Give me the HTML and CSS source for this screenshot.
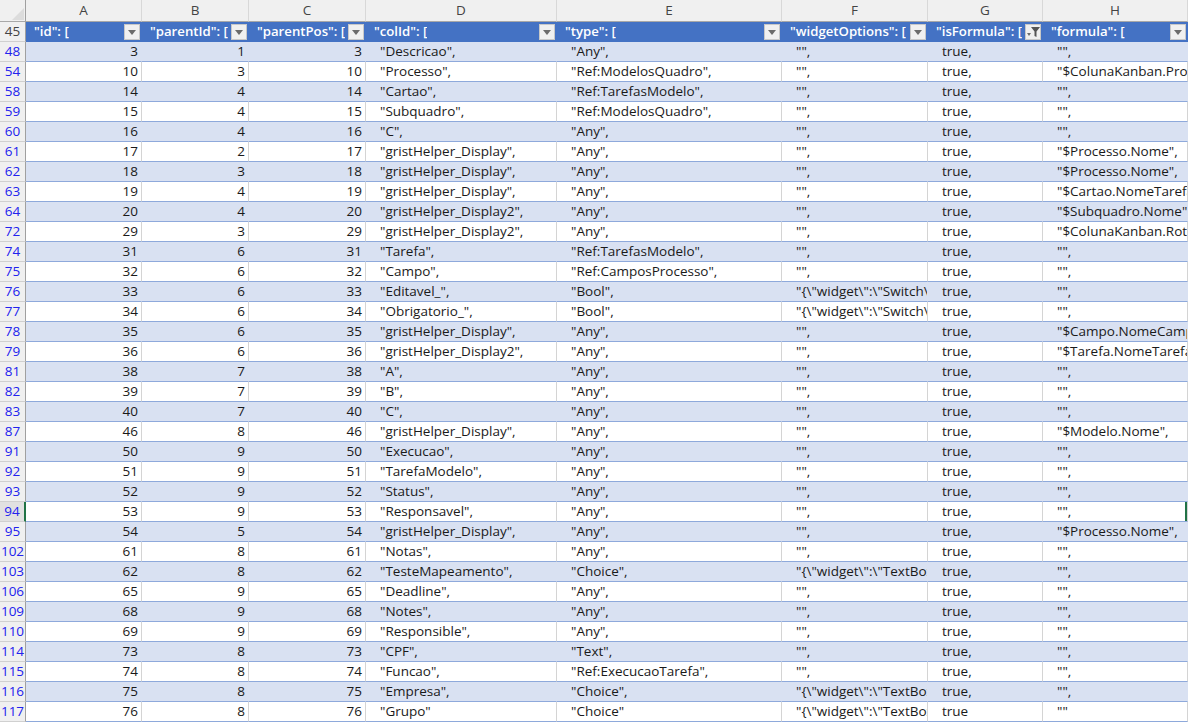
FILE: index.html
```html
<!DOCTYPE html>
<html lang="pt">
<head>
<meta charset="utf-8">
<title>Planilha</title>
<link rel="stylesheet" href="styles.css">
</head>
<body>
<svg class="defs" width="0" height="0" aria-hidden="true">
  <symbol id="dd" viewBox="0 0 14 14"><path d="M3 5h8L7 10z" fill="#6b6b6b"/></symbol>
  <symbol id="ff" viewBox="0 0 14 14"><path d="M5 2h9L10.5 6.5V12L8.5 11V6.5z" fill="#555"/><path d="M1 8h4L3 11z" fill="#6b6b6b"/></symbol>
</svg>
<table class="sheet">
<colgroup><col class="c-rn"><col class="c-a"><col class="c-b"><col class="c-c"><col class="c-d"><col class="c-e"><col class="c-f"><col class="c-g"><col class="c-h"></colgroup>
<thead>
<tr class="letters"><th class="corner"><svg width="14" height="14" viewBox="0 0 14 14"><path d="M13 1v12H1z" fill="#dcdcdc"/></svg></th><th>A</th><th>B</th><th>C</th><th>D</th><th>E</th><th>F</th><th>G</th><th>H</th></tr>
<tr class="filters"><th class="rn">45</th>
<th><div class="fh"><span>"id": [</span><button class="fb"><svg><use href="#dd"/></svg></button></div></th>
<th><div class="fh"><span>"parentId": [</span><button class="fb"><svg><use href="#dd"/></svg></button></div></th>
<th><div class="fh"><span>"parentPos": [</span><button class="fb"><svg><use href="#dd"/></svg></button></div></th>
<th><div class="fh"><span>"colId": [</span><button class="fb"><svg><use href="#dd"/></svg></button></div></th>
<th><div class="fh"><span>"type": [</span><button class="fb"><svg><use href="#dd"/></svg></button></div></th>
<th><div class="fh"><span>"widgetOptions": [</span><button class="fb"><svg><use href="#dd"/></svg></button></div></th>
<th><div class="fh"><span>"isFormula": [</span><button class="fb"><svg><use href="#ff"/></svg></button></div></th>
<th><div class="fh"><span>"formula": [</span><button class="fb"><svg><use href="#dd"/></svg></button></div></th></tr>
</thead>
<tbody id="rows">
<tr><th class="rn">48</th><td class="n">3</td><td class="n">1</td><td class="n">3</td><td><div>"Descricao",</div></td><td><div>"Any",</div></td><td><div>"",</div></td><td><div>true,</div></td><td><div>"",</div></td></tr>
<tr><th class="rn">54</th><td class="n">10</td><td class="n">3</td><td class="n">10</td><td><div>"Processo",</div></td><td><div>"Ref:ModelosQuadro",</div></td><td><div>"",</div></td><td><div>true,</div></td><td><div>"$ColunaKanban.Processo",</div></td></tr>
<tr><th class="rn">58</th><td class="n">14</td><td class="n">4</td><td class="n">14</td><td><div>"Cartao",</div></td><td><div>"Ref:TarefasModelo",</div></td><td><div>"",</div></td><td><div>true,</div></td><td><div>"",</div></td></tr>
<tr><th class="rn">59</th><td class="n">15</td><td class="n">4</td><td class="n">15</td><td><div>"Subquadro",</div></td><td><div>"Ref:ModelosQuadro",</div></td><td><div>"",</div></td><td><div>true,</div></td><td><div>"",</div></td></tr>
<tr><th class="rn">60</th><td class="n">16</td><td class="n">4</td><td class="n">16</td><td><div>"C",</div></td><td><div>"Any",</div></td><td><div>"",</div></td><td><div>true,</div></td><td><div>"",</div></td></tr>
<tr><th class="rn">61</th><td class="n">17</td><td class="n">2</td><td class="n">17</td><td><div>"gristHelper_Display",</div></td><td><div>"Any",</div></td><td><div>"",</div></td><td><div>true,</div></td><td><div>"$Processo.Nome",</div></td></tr>
<tr><th class="rn">62</th><td class="n">18</td><td class="n">3</td><td class="n">18</td><td><div>"gristHelper_Display",</div></td><td><div>"Any",</div></td><td><div>"",</div></td><td><div>true,</div></td><td><div>"$Processo.Nome",</div></td></tr>
<tr><th class="rn">63</th><td class="n">19</td><td class="n">4</td><td class="n">19</td><td><div>"gristHelper_Display",</div></td><td><div>"Any",</div></td><td><div>"",</div></td><td><div>true,</div></td><td><div>"$Cartao.NomeTarefa",</div></td></tr>
<tr><th class="rn">64</th><td class="n">20</td><td class="n">4</td><td class="n">20</td><td><div>"gristHelper_Display2",</div></td><td><div>"Any",</div></td><td><div>"",</div></td><td><div>true,</div></td><td><div>"$Subquadro.Nome",</div></td></tr>
<tr><th class="rn">72</th><td class="n">29</td><td class="n">3</td><td class="n">29</td><td><div>"gristHelper_Display2",</div></td><td><div>"Any",</div></td><td><div>"",</div></td><td><div>true,</div></td><td><div>"$ColunaKanban.Rotulo",</div></td></tr>
<tr><th class="rn">74</th><td class="n">31</td><td class="n">6</td><td class="n">31</td><td><div>"Tarefa",</div></td><td><div>"Ref:TarefasModelo",</div></td><td><div>"",</div></td><td><div>true,</div></td><td><div>"",</div></td></tr>
<tr><th class="rn">75</th><td class="n">32</td><td class="n">6</td><td class="n">32</td><td><div>"Campo",</div></td><td><div>"Ref:CamposProcesso",</div></td><td><div>"",</div></td><td><div>true,</div></td><td><div>"",</div></td></tr>
<tr><th class="rn">76</th><td class="n">33</td><td class="n">6</td><td class="n">33</td><td><div>"Editavel_",</div></td><td><div>"Bool",</div></td><td><div>"{\"widget\":\"Switch\"}",</div></td><td><div>true,</div></td><td><div>"",</div></td></tr>
<tr><th class="rn">77</th><td class="n">34</td><td class="n">6</td><td class="n">34</td><td><div>"Obrigatorio_",</div></td><td><div>"Bool",</div></td><td><div>"{\"widget\":\"Switch\"}",</div></td><td><div>true,</div></td><td><div>"",</div></td></tr>
<tr><th class="rn">78</th><td class="n">35</td><td class="n">6</td><td class="n">35</td><td><div>"gristHelper_Display",</div></td><td><div>"Any",</div></td><td><div>"",</div></td><td><div>true,</div></td><td><div>"$Campo.NomeCampo",</div></td></tr>
<tr><th class="rn">79</th><td class="n">36</td><td class="n">6</td><td class="n">36</td><td><div>"gristHelper_Display2",</div></td><td><div>"Any",</div></td><td><div>"",</div></td><td><div>true,</div></td><td><div>"$Tarefa.NomeTarefa",</div></td></tr>
<tr><th class="rn">81</th><td class="n">38</td><td class="n">7</td><td class="n">38</td><td><div>"A",</div></td><td><div>"Any",</div></td><td><div>"",</div></td><td><div>true,</div></td><td><div>"",</div></td></tr>
<tr><th class="rn">82</th><td class="n">39</td><td class="n">7</td><td class="n">39</td><td><div>"B",</div></td><td><div>"Any",</div></td><td><div>"",</div></td><td><div>true,</div></td><td><div>"",</div></td></tr>
<tr><th class="rn">83</th><td class="n">40</td><td class="n">7</td><td class="n">40</td><td><div>"C",</div></td><td><div>"Any",</div></td><td><div>"",</div></td><td><div>true,</div></td><td><div>"",</div></td></tr>
<tr><th class="rn">87</th><td class="n">46</td><td class="n">8</td><td class="n">46</td><td><div>"gristHelper_Display",</div></td><td><div>"Any",</div></td><td><div>"",</div></td><td><div>true,</div></td><td><div>"$Modelo.Nome",</div></td></tr>
<tr><th class="rn">91</th><td class="n">50</td><td class="n">9</td><td class="n">50</td><td><div>"Execucao",</div></td><td><div>"Any",</div></td><td><div>"",</div></td><td><div>true,</div></td><td><div>"",</div></td></tr>
<tr><th class="rn">92</th><td class="n">51</td><td class="n">9</td><td class="n">51</td><td><div>"TarefaModelo",</div></td><td><div>"Any",</div></td><td><div>"",</div></td><td><div>true,</div></td><td><div>"",</div></td></tr>
<tr><th class="rn">93</th><td class="n">52</td><td class="n">9</td><td class="n">52</td><td><div>"Status",</div></td><td><div>"Any",</div></td><td><div>"",</div></td><td><div>true,</div></td><td><div>"",</div></td></tr>
<tr class="active"><th class="rn">94</th><td class="n">53</td><td class="n">9</td><td class="n">53</td><td><div>"Responsavel",</div></td><td><div>"Any",</div></td><td><div>"",</div></td><td><div>true,</div></td><td><div>"",</div></td></tr>
<tr><th class="rn">95</th><td class="n">54</td><td class="n">5</td><td class="n">54</td><td><div>"gristHelper_Display",</div></td><td><div>"Any",</div></td><td><div>"",</div></td><td><div>true,</div></td><td><div>"$Processo.Nome",</div></td></tr>
<tr><th class="rn">102</th><td class="n">61</td><td class="n">8</td><td class="n">61</td><td><div>"Notas",</div></td><td><div>"Any",</div></td><td><div>"",</div></td><td><div>true,</div></td><td><div>"",</div></td></tr>
<tr><th class="rn">103</th><td class="n">62</td><td class="n">8</td><td class="n">62</td><td><div>"TesteMapeamento",</div></td><td><div>"Choice",</div></td><td><div>"{\"widget\":\"TextBox\"}",</div></td><td><div>true,</div></td><td><div>"",</div></td></tr>
<tr><th class="rn">106</th><td class="n">65</td><td class="n">9</td><td class="n">65</td><td><div>"Deadline",</div></td><td><div>"Any",</div></td><td><div>"",</div></td><td><div>true,</div></td><td><div>"",</div></td></tr>
<tr><th class="rn">109</th><td class="n">68</td><td class="n">9</td><td class="n">68</td><td><div>"Notes",</div></td><td><div>"Any",</div></td><td><div>"",</div></td><td><div>true,</div></td><td><div>"",</div></td></tr>
<tr><th class="rn">110</th><td class="n">69</td><td class="n">9</td><td class="n">69</td><td><div>"Responsible",</div></td><td><div>"Any",</div></td><td><div>"",</div></td><td><div>true,</div></td><td><div>"",</div></td></tr>
<tr><th class="rn">114</th><td class="n">73</td><td class="n">8</td><td class="n">73</td><td><div>"CPF",</div></td><td><div>"Text",</div></td><td><div>"",</div></td><td><div>true,</div></td><td><div>"",</div></td></tr>
<tr><th class="rn">115</th><td class="n">74</td><td class="n">8</td><td class="n">74</td><td><div>"Funcao",</div></td><td><div>"Ref:ExecucaoTarefa",</div></td><td><div>"",</div></td><td><div>true,</div></td><td><div>"",</div></td></tr>
<tr><th class="rn">116</th><td class="n">75</td><td class="n">8</td><td class="n">75</td><td><div>"Empresa",</div></td><td><div>"Choice",</div></td><td><div>"{\"widget\":\"TextBox\"}",</div></td><td><div>true,</div></td><td><div>"",</div></td></tr>
<tr><th class="rn">117</th><td class="n">76</td><td class="n">8</td><td class="n">76</td><td><div>"Grupo"</div></td><td><div>"Choice"</div></td><td><div>"{\"widget\":\"TextBox\"}"</div></td><td><div>true</div></td><td><div>""</div></td></tr>
</tbody>
</table>
</body>
</html>
```
FILE: styles.css
```css
html, body { margin: 0; padding: 0; background: #fff; overflow: hidden; }
body { font-family: "Open Sans", "Noto Sans", sans-serif; font-size: 13.5px; color: #1a1a1a; }
.defs { position: absolute; }
.sheet { border-collapse: separate; border-spacing: 0; table-layout: fixed; width: 1188px; }
.c-rn { width: 26px; } .c-a { width: 116px; } .c-b { width: 107px; } .c-c { width: 117px; }
.c-d { width: 191px; } .c-e { width: 225px; } .c-f { width: 146px; } .c-g { width: 115px; } .c-h { width: 145px; }
th, td { padding: 0; height: 19px; line-height: 19px; font-weight: 400; border-bottom: 1px solid #8ea9db; overflow: hidden; white-space: nowrap; }
.letters th { height: 20px; line-height: 21px; padding: 0; background: #f0f0f0; color: #444; border-bottom: 1px solid #a8a8a8; border-right: 1px solid #d8d8d8; text-align: center; }
.letters .corner { border-right: 1px solid #a0a0a0; line-height: 0; text-align: right; vertical-align: bottom; }
.rn { background: #f0f0f0; color: #2222ee; text-align: center; border-bottom: 1px solid #d0d0d0; border-right: 1px solid #a0a0a0; }
.filters th:not(.rn) { background: #4472c4; color: #fff; font-size: 13.2px; font-weight: 600; border-bottom: 0; padding: 0; height: 20px; }
.filters .rn { color: #444; height: 19px; }
.fh { display: flex; align-items: center; justify-content: space-between; padding: 0 2px 0 8px; height: 20px; }
.fh span { overflow: hidden; line-height: 18px; margin-top: -3px; }
.fb { flex: none; width: 16px; height: 16px; padding: 0; background: #f0f0f0; border: 1px solid #c8c8c8; display: flex; align-items: center; justify-content: center; }
.fb svg { width: 14px; height: 14px; }
td { border-right: 1px solid #d4d4d4; background: #fff; }
tbody tr:nth-child(odd) td { background: #d9e1f2; border-right-color: #d9e1f2; }
td div { padding-left: 14px; overflow: hidden; }
td.n { text-align: right; padding-right: 3px; }
.active .rn { background: #e1e1e1; border-right: 2px solid #217346; color: #2222ee; }
.active td:last-child { box-shadow: inset -2px 0 0 #217346; }
```
